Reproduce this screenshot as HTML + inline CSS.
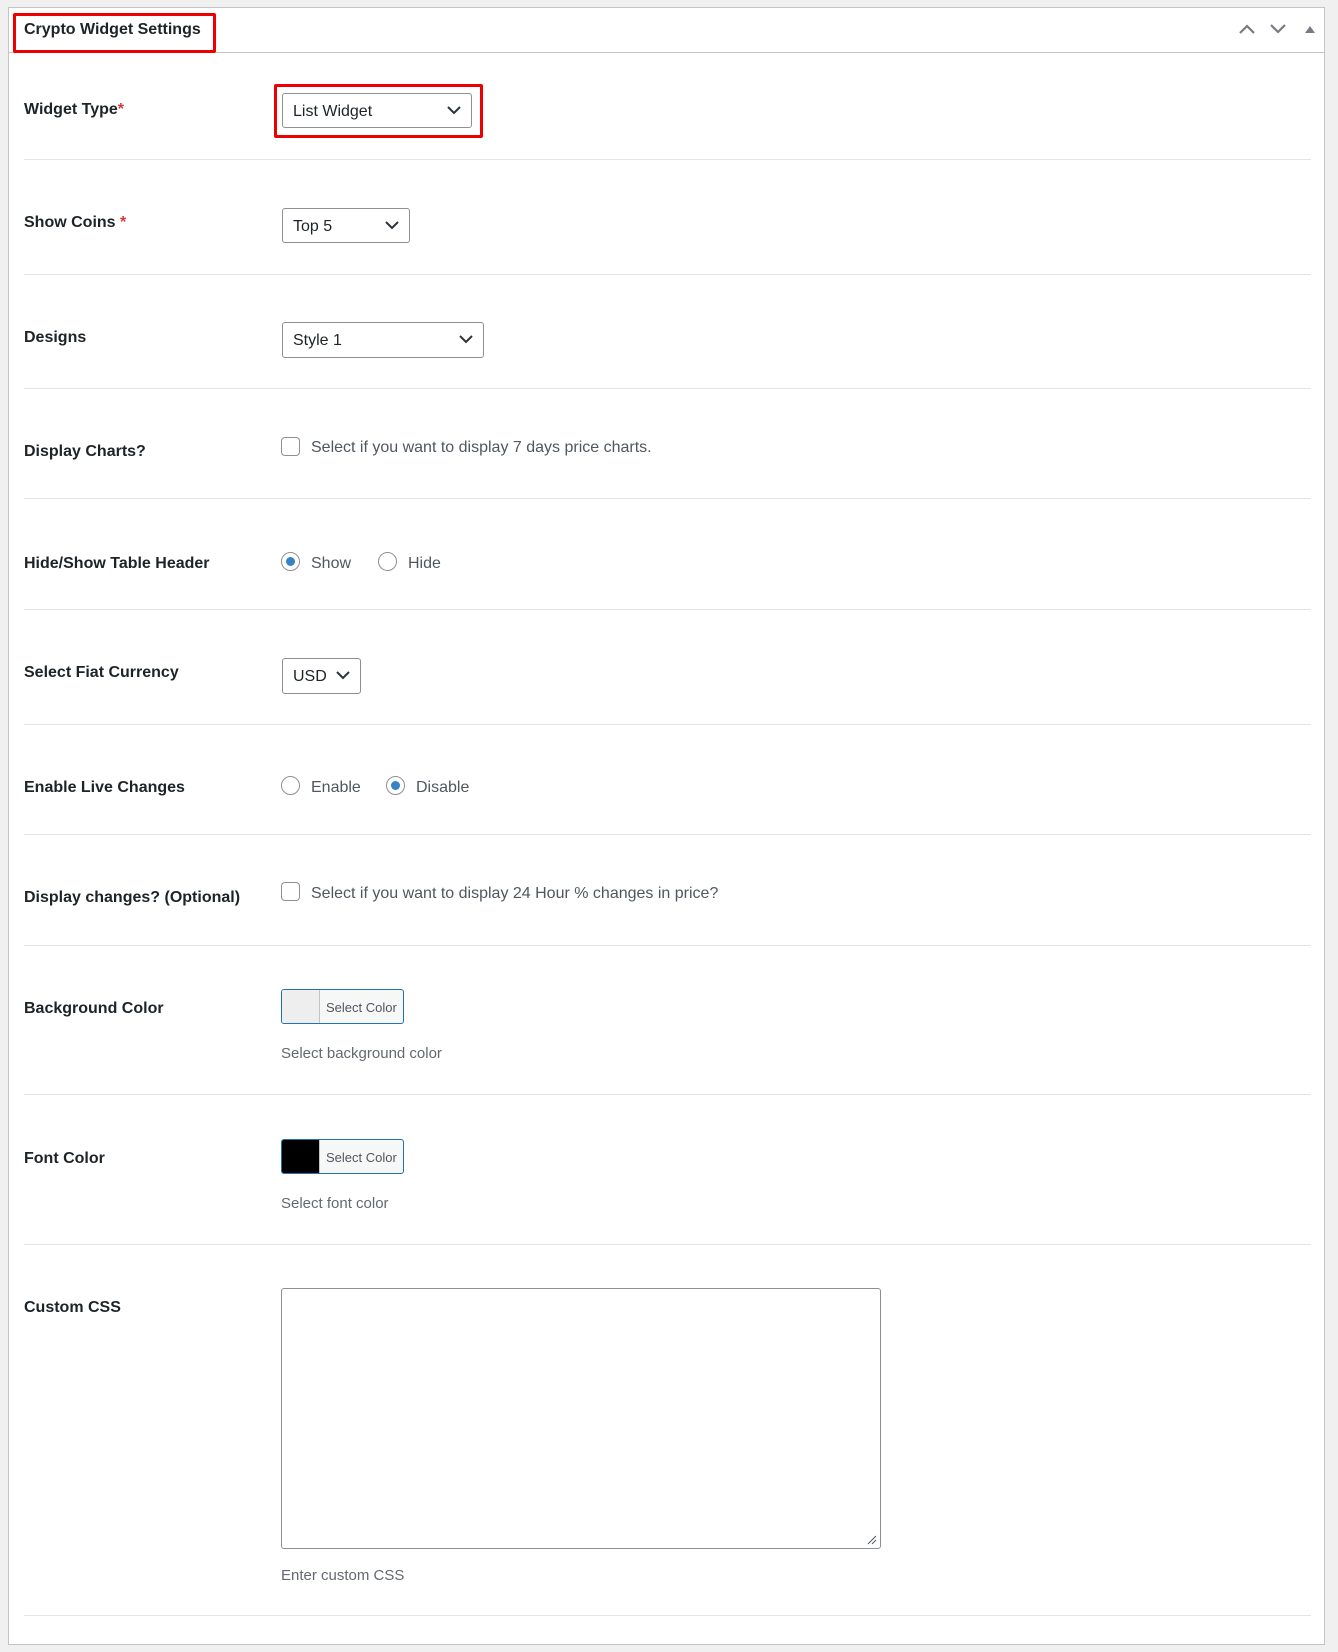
<!DOCTYPE html>
<html><head><meta charset="utf-8"><style>
body{margin:0;width:1338px;height:1652px;background:#f0f0f1;font-family:"Liberation Sans",sans-serif;color:#1d2327;position:relative;overflow:hidden}
.panel{position:absolute;left:8px;top:7px;width:1317px;height:1638px;background:#fff;border:1px solid #c3c4c7;box-sizing:border-box}
.hdr{position:absolute;left:0;top:0;right:0;height:44px;border-bottom:1px solid #c3c4c7}
.abs{position:absolute}
.lbl{position:absolute;left:24px;font-size:16px;font-weight:bold;color:#1d2327;transform:translateY(-40%)}
.sep{position:absolute;left:24px;width:1287px;height:1px;background:#e2e4e7}
.sel{position:absolute;left:282px;border:1px solid #8c8f94;border-radius:3px;box-sizing:border-box;font-size:16px;padding-left:10px;padding-top:2px;display:flex;align-items:center;background:#fff}
.sel svg{position:absolute;right:10px;top:50%;margin-top:-5px}
.cb{position:absolute;left:281px;width:19px;height:19px;border:1px solid #8c8f94;border-radius:4px;box-sizing:border-box}
.rd{position:absolute;width:19px;height:19px;border:1px solid #8c8f94;border-radius:50%;box-sizing:border-box}
.rd.on::after{content:"";position:absolute;left:4px;top:4px;width:9px;height:9px;border-radius:50%;background:#3582c4}
.txt{position:absolute;font-size:16px;color:#50575e;transform:translateY(-40%)}
.help{position:absolute;left:281px;font-size:15px;color:#646970;transform:translateY(-40%)}
.cbtn{position:absolute;left:281px;width:123px;height:35px;border:1px solid #2271b1;border-radius:3px;box-sizing:border-box;background:#f6f7f7;overflow:hidden}
.cbtn .sw{position:absolute;left:0;top:0;bottom:0;width:37px;border-right:1px solid #c3c4c7}
.cbtn span{position:absolute;left:44px;top:10px;font-size:13px;color:#50575e}
.red{position:absolute;border:3px solid #e00;box-sizing:border-box;border-radius:2px}
</style></head><body>
<div class="panel">
<div class="hdr"></div>
</div>
<div class="red" style="left:13px;top:13px;width:203px;height:40px"></div>
<div class="abs" style="left:24px;top:21px;font-size:16px;font-weight:bold">Crypto Widget Settings</div>
<svg class="abs" style="left:1238px;top:23px" width="18" height="12"><path d="M2 10 L9 3 L16 10" stroke="#787c82" stroke-width="2.2" fill="none"/></svg>
<svg class="abs" style="left:1269px;top:23px" width="18" height="12"><path d="M2 2 L9 9 L16 2" stroke="#787c82" stroke-width="2.2" fill="none"/></svg>
<svg class="abs" style="left:1304px;top:25px" width="12" height="9"><path d="M1 8 L6 1 L11 8Z" fill="#787c82"/></svg>

<div class="lbl" style="top:108px">Widget Type<span style="color:#d63638">*</span></div>
<div class="red" style="left:274px;top:84px;width:209px;height:54px"></div>
<div class="sel" style="top:93px;width:190px;height:35px">List Widget<svg width="14" height="9"><path d="M1 1 L7 7 L13 1" stroke="#2c3338" stroke-width="2" fill="none"/></svg></div>
<div class="sep" style="top:159px"></div>

<div class="lbl" style="top:221px">Show Coins <span style="color:#d63638">*</span></div>
<div class="sel" style="top:208px;width:128px;height:35px">Top 5<svg width="14" height="9"><path d="M1 1 L7 7 L13 1" stroke="#2c3338" stroke-width="2" fill="none"/></svg></div>
<div class="sep" style="top:274px"></div>

<div class="lbl" style="top:336px">Designs</div>
<div class="sel" style="top:322px;width:202px;height:36px">Style 1<svg width="14" height="9"><path d="M1 1 L7 7 L13 1" stroke="#2c3338" stroke-width="2" fill="none"/></svg></div>
<div class="sep" style="top:388px"></div>

<div class="lbl" style="top:450px">Display Charts?</div>
<div class="cb" style="top:437px"></div>
<div class="txt" style="left:311px;top:446px">Select if you want to display 7 days price charts.</div>
<div class="sep" style="top:498px"></div>

<div class="lbl" style="top:562px">Hide/Show Table Header</div>
<div class="rd on" style="left:281px;top:552px"></div>
<div class="txt" style="left:311px;top:562px">Show</div>
<div class="rd" style="left:378px;top:552px"></div>
<div class="txt" style="left:408px;top:562px">Hide</div>
<div class="sep" style="top:609px"></div>

<div class="lbl" style="top:671px">Select Fiat Currency</div>
<div class="sel" style="top:658px;width:79px;height:36px">USD<svg width="14" height="9"><path d="M1 1 L7 7 L13 1" stroke="#2c3338" stroke-width="2" fill="none"/></svg></div>
<div class="sep" style="top:724px"></div>

<div class="lbl" style="top:786px">Enable Live Changes</div>
<div class="rd" style="left:281px;top:776px"></div>
<div class="txt" style="left:311px;top:786px">Enable</div>
<div class="rd on" style="left:386px;top:776px"></div>
<div class="txt" style="left:416px;top:786px">Disable</div>
<div class="sep" style="top:834px"></div>

<div class="lbl" style="top:896px">Display changes? (Optional)</div>
<div class="cb" style="top:882px"></div>
<div class="txt" style="left:311px;top:892px">Select if you want to display 24 Hour % changes in price?</div>
<div class="sep" style="top:945px"></div>

<div class="lbl" style="top:1007px">Background Color</div>
<div class="cbtn" style="top:989px"><div class="sw" style="background:#eeeeee"></div><span>Select Color</span></div>
<div class="help" style="top:1052px">Select background color</div>
<div class="sep" style="top:1094px"></div>

<div class="lbl" style="top:1157px">Font Color</div>
<div class="cbtn" style="top:1139px"><div class="sw" style="background:#000"></div><span>Select Color</span></div>
<div class="help" style="top:1202px">Select font color</div>
<div class="sep" style="top:1244px"></div>

<div class="lbl" style="top:1306px">Custom CSS</div>
<div class="abs" style="left:281px;top:1288px;width:600px;height:261px;border:1px solid #8c8f94;border-radius:3px;box-sizing:border-box"></div>
<svg class="abs" style="left:867px;top:1535px" width="10" height="10"><path d="M9 1 L1 9 M9 5 L5 9" stroke="#50575e" stroke-width="1"/></svg>
<div class="help" style="top:1574px">Enter custom CSS</div>
<div class="sep" style="top:1615px"></div>
</body></html>
